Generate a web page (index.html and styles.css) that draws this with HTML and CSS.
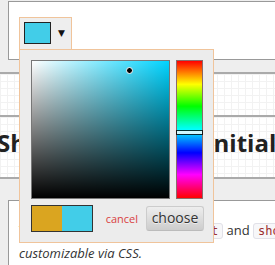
FILE: index.html
```html
<!DOCTYPE html>
<html lang="en">
<head>
    <meta charset="UTF-8">
    <meta name="viewport" content="width=device-width, initial-scale=1.0">
    <title>Spectrum Colorpicker</title>
    <link rel="stylesheet" href="styles.css">
</head>
<body>

    <div class="page">
        <div class="example example-top">
            <div class="replacer">
                <div class="preview"></div>
                <div class="dd">&#9660;</div>
            </div>
        </div>

        <div class="band"></div>
        <div class="grid-block"></div>
        <div class="grid-block heading-block">
            <h2>Show Input and Initial</h2>
        </div>
        <div class="band band-low"></div>

        <div class="example example-text">
            <p>They are set through <code>showInput</code> and <code>showInitial</code>, and they are both<br><em>customizable via CSS.</em></p>
        </div>
    </div>

    <!-- picker popup, open under the replacer -->
    <div class="sp-container">
        <div class="sp-top">
            <div class="sp-color">
                <div class="sp-sat"></div>
                <div class="sp-val"></div>
                <div class="sp-dragger"></div>
            </div>
            <div class="sp-hue">
                <div class="sp-slider"></div>
            </div>
        </div>
        <div class="sp-bottom">
            <div class="sp-initial">
                <span class="sp-old"></span>
                <span class="sp-new"></span>
            </div>
            <div class="sp-buttons">
                <a href="#" class="sp-cancel">cancel</a>
                <button class="sp-choose">choose</button>
            </div>
        </div>
    </div>

</body>
</html>
```

FILE: styles.css
```css
* {
    box-sizing: border-box;
}
html, body {
    margin: 0;
    overflow: hidden;
}
body {
    position: relative;
    width: 275px;
    height: 265px;
    background: #eee;
    font-family: "Open Sans", sans-serif;
    color: #333;
}
.page {
    width: 700px;
}

/* white example boxes */
.example {
    margin-left: 8px;
    background: #fff;
    border: 1px solid #999;
    border-right: none;
}
.example-top {
    margin-top: 1px;
    height: 59px;
    padding: 15px 0 0 10px;
}
.example-text {
    height: 80px;
}

/* replacer (closed picker) */
.replacer {
    display: inline-flex;
    align-items: center;
    height: 33px;
    padding: 4px 6px 5px 4px;
    background: #eee;
    border: 1px solid #f0c49b;
}
.preview {
    width: 27px;
    height: 22px;
    margin-right: 7px;
    background: #42cde8;
    border: 1px solid #222;
}
.dd {
    font-family: "DejaVu Sans", sans-serif;
    font-size: 9px;
    line-height: 10px;
    color: #111;
}

/* page sections */
.band {
    height: 12px;
}
.band-low {
    height: 21px;
}
.grid-block {
    height: 43px;
    border-top: 2px solid #aaa;
    background-color: #fff;
    background-image:
        linear-gradient(#f2f2f2 1px, transparent 1px),
        linear-gradient(90deg, #f2f2f2 1px, transparent 1px);
    background-size: 7px 7px;
}
.heading-block {
    height: 64px;
    border-bottom: 2px solid #aaa;
    padding-top: 10px;
}
h2 {
    margin: 0 0 0 -3px;
    font-size: 24px;
    line-height: 32px;
    font-weight: 700;
    color: #222;
    white-space: nowrap;
    word-spacing: 5px;
}

/* text box */
.example-text p {
    margin: 0;
    padding: 18px 0 0 10px;
    font-size: 13px;
    line-height: 22px;
    white-space: nowrap;
}
code {
    padding: 0 4px;
    font-family: "DejaVu Sans Mono", monospace;
    font-size: 12px;
    color: #9c3030;
    background: #f7f7f9;
    border: 1px solid #e1e1e8;
    border-radius: 3px;
}

/* picker popup */
.sp-container {
    position: absolute;
    left: 19px;
    top: 49px;
    width: 195px;
    height: 194px;
    padding: 10px 9px 10px 11px;
    display: flex;
    flex-direction: column;
    gap: 6px;
    background: #ececec;
    border: 1px solid #f0c49b;
}
.sp-top {
    display: flex;
    gap: 6px;
}
.sp-color {
    position: relative;
    width: 139px;
    height: 139px;
    background: #00d4ff;
    border: 1px solid #777;
}
.sp-sat, .sp-val {
    position: absolute;
    inset: 0;
}
.sp-sat {
    background: linear-gradient(to right, #fff, rgba(255, 255, 255, 0));
}
.sp-val {
    background: linear-gradient(to top, #000, rgba(0, 0, 0, 0));
}
.sp-dragger {
    position: absolute;
    left: 94px;
    top: 6px;
    width: 7px;
    height: 7px;
    background: #000;
    border: 1px solid #fff;
    border-radius: 50%;
}
.sp-hue {
    position: relative;
    width: 27px;
    height: 139px;
    border: 1px solid #8b6b6b;
    background: linear-gradient(to bottom, #f00 0%, #ff0 17%, #0f0 33%, #0ff 50%, #00f 67%, #f0f 83%, #f00 100%);
}
.sp-slider {
    position: absolute;
    left: -1px;
    right: -1px;
    top: 69px;
    height: 5px;
    background: #fff;
    border: 1px solid #000;
    opacity: 0.8;
}
.sp-bottom {
    display: flex;
    justify-content: space-between;
    align-items: center;
}
.sp-initial {
    display: flex;
    border: 1px solid #333;
}
.sp-initial span {
    width: 30px;
    height: 25px;
}
.sp-old {
    background: #daa520;
}
.sp-new {
    background: #42cde8;
}
.sp-buttons {
    display: flex;
    align-items: center;
    margin-bottom: 1px;
}
.sp-cancel {
    margin-right: 6px;
    padding: 2px;
    font-size: 11px;
    color: #d93f3f;
    text-decoration: none;
}
.sp-choose {
    width: 58px;
    height: 25px;
    padding: 0 4px;
    font-family: "Open Sans", sans-serif;
    font-size: 14px;
    line-height: 1;
    color: #333;
    text-shadow: 0 1px 0 #eee;
    background: linear-gradient(to bottom, #eee, #ccc);
    border: 1px solid #ccc;
    border-bottom-color: #bbb;
    border-radius: 3px;
}
```
